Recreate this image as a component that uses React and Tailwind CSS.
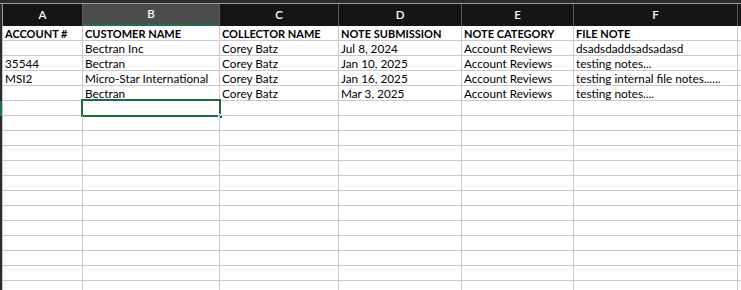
const cols = [
  { key: "A", w: "w-[80px]" },
  { key: "B", w: "w-[137px]" },
  { key: "C", w: "w-[119px]" },
  { key: "D", w: "w-[123px]" },
  { key: "E", w: "w-[112px]" },
  { key: "F", w: "w-[164px]" },
];

const rows = [
  ["ACCOUNT #", "CUSTOMER NAME", "COLLECTOR NAME", "NOTE SUBMISSION", "NOTE CATEGORY", "FILE NOTE"],
  ["", "Bectran Inc", "Corey Batz", "Jul 8, 2024", "Account Reviews", "dsadsdaddsadsadasd"],
  ["35544", "Bectran", "Corey Batz", "Jan 10, 2025", "Account Reviews", "testing notes..."],
  ["MSI2", "Micro-Star International", "Corey Batz", "Jan 16, 2025", "Account Reviews", "testing internal file notes......"],
  ["", "Bectran", "Corey Batz", "Mar 3, 2025", "Account Reviews", "testing notes...."],
];

const totalRows = 18;
const selRow = 5;

export default function App() {
  const allRows = Array.from({ length: totalRows }, (_, i) => rows[i] || ["", "", "", "", "", ""]);

  return (
    <div
      className="w-[741px] h-[290px] overflow-hidden bg-white text-black"
      style={{ fontFamily: "Lato, 'Open Sans', sans-serif" }}
    >
      {/* top strip */}
      <div className="h-[3px] bg-[#2c2c2c]" />
      <div className="h-px bg-[#9c9c9c]" />

      {/* column letters */}
      <div className="flex h-[22px] bg-[#151515]">
        <div className="w-[2px] bg-[#2c2c2c]" />
        <div className="w-px bg-[#9c9c9c]" />
        {cols.map((c) => (
          <div
            key={c.key}
            className={`${c.w} shrink-0 flex items-center justify-center border-r border-[#5a5a5a] text-[11.5px] font-semibold text-white ${
              c.key === "B" ? "bg-[#4c4c4c] border-b-2 border-b-[#1f7145]" : ""
            }`}
          >
            {c.key}
          </div>
        ))}
        <div className="flex-1" />
      </div>

      {/* grid rows */}
      {allRows.map((r, i) => (
        <div key={i} className="flex h-[15px]">
          <div className={`w-[2px] ${i === selRow ? "bg-[#1f7145]" : "bg-[#2c2c2c]"}`} />
          <div className="w-px bg-[#c4c4c4]" />
          {cols.map((c, j) => {
            const selected = i === selRow && j === 1;
            return (
              <div
                key={c.key}
                className={`${c.w} shrink-0 relative border-r border-b border-[#cacaca] px-[2px] leading-[16px] whitespace-nowrap overflow-visible ${
                  i === 0 ? "font-bold text-[11px]" : "text-[11.75px]"
                }`}
              >
                {r[j]}
                {selected && (
                  <div className="absolute -left-[2px] -top-[2px] right-[-2px] bottom-[-2px] border-2 border-[#1f6b3e]">
                    <div className="absolute -right-[4px] -bottom-[4px] w-[5px] h-[5px] bg-[#1f6b3e] border border-white" />
                  </div>
                )}
              </div>
            );
          })}
          <div className="flex-1 border-b border-[#cacaca]" />
        </div>
      ))}
    </div>
  );
}
